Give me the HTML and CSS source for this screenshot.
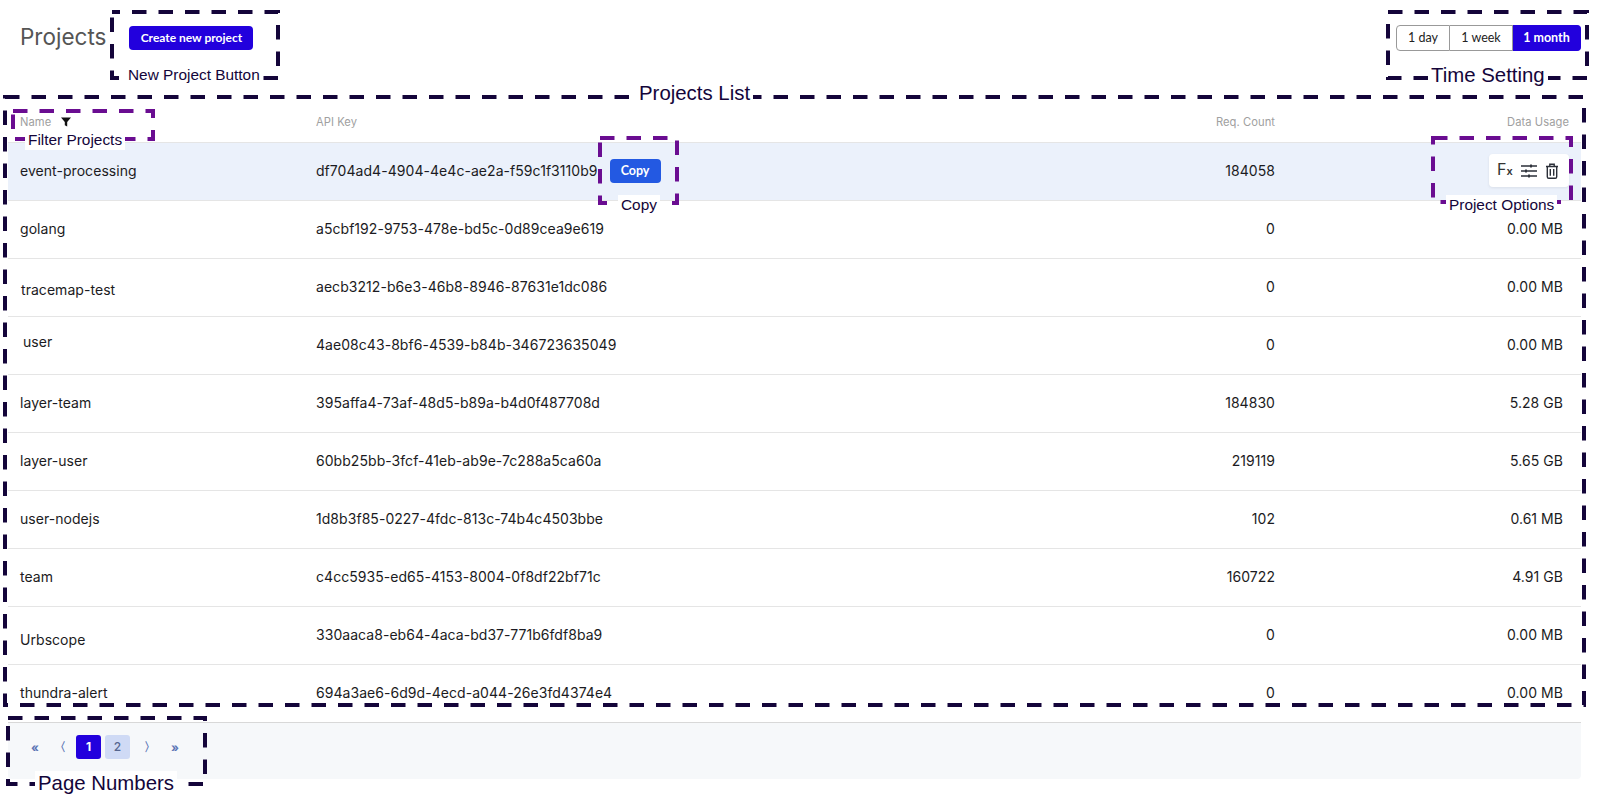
FILE: index.html
```html
<!DOCTYPE html>
<html lang="en">
<head>
  <meta charset="UTF-8">
  <title>Projects</title>
  <link rel="stylesheet" href="styles.css">
</head>
<body>
  <div id="page">
    <div class="top-bar">
      <h1>Projects</h1>
      <button class="create-btn">Create new project</button>
      <div class="time-group">
        <button>1 day</button>
        <button>1 week</button>
        <button class="active">1 month</button>
      </div>
    </div>

    <div class="row head">
      <div class="name-head">Name
        <svg width="10" height="10" viewBox="0 0 10 10"><path d="M0 0.5h10L6.2 5v4.5L3.8 8.2V5z" fill="#111"/></svg>
      </div>
      <div>API Key</div>
      <div class="num">Req. Count</div>
      <div class="usage">Data Usage</div>
    </div>

    <div class="row selected">
      <div>event-processing</div>
      <div class="key-cell">df704ad4-4904-4e4c-ae2a-f59c1f3110b9 <button class="copy-btn">Copy</button></div>
      <div class="num">184058</div>
      <div class="options-cell">
        <div class="options">
          <span class="fx">F<small>x</small></span>
          <svg width="18" height="14" viewBox="0 0 18 14" fill="none" stroke="#2b2f38" stroke-width="1.6"><path d="M1 2h16M1 7h16M1 12h16"/><path d="M11 .4v3.2M6 5.4v3.2M9 10.4v3.2" stroke-width="1.8"/></svg>
          <svg width="14" height="16" viewBox="0 0 14 16" fill="none" stroke="#2b2f38" stroke-width="1.4"><path d="M1 3.5h12M4.8 3.2V1.2h4.4v2M2.3 3.5v10.2c0 .9.6 1.6 1.5 1.6h6.4c.9 0 1.5-.7 1.5-1.6V3.5M5.3 6v6.8M8.7 6v6.8"/></svg>
        </div>
      </div>
    </div>
    <div class="row"><div>golang</div><div>a5cbf192-9753-478e-bd5c-0d89cea9e619</div><div class="num">0</div><div class="usage-val">0.00 MB</div></div>
    <div class="row"><div class="tracemap">tracemap-test</div><div>aecb3212-b6e3-46b8-8946-87631e1dc086</div><div class="num">0</div><div class="usage-val">0.00 MB</div></div>
    <div class="row"><div class="user-name">user</div><div>4ae08c43-8bf6-4539-b84b-346723635049</div><div class="num">0</div><div class="usage-val">0.00 MB</div></div>
    <div class="row"><div>layer-team</div><div>395affa4-73af-48d5-b89a-b4d0f487708d</div><div class="num">184830</div><div class="usage-val">5.28 GB</div></div>
    <div class="row"><div>layer-user</div><div>60bb25bb-3fcf-41eb-ab9e-7c288a5ca60a</div><div class="num">219119</div><div class="usage-val">5.65 GB</div></div>
    <div class="row"><div>user-nodejs</div><div>1d8b3f85-0227-4fdc-813c-74b4c4503bbe</div><div class="num">102</div><div class="usage-val">0.61 MB</div></div>
    <div class="row"><div>team</div><div>c4cc5935-ed65-4153-8004-0f8df22bf71c</div><div class="num">160722</div><div class="usage-val">4.91 GB</div></div>
    <div class="row"><div class="urbscope">Urbscope</div><div>330aaca8-eb64-4aca-bd37-771b6fdf8ba9</div><div class="num">0</div><div class="usage-val">0.00 MB</div></div>
    <div class="row"><div>thundra-alert</div><div>694a3ae6-6d9d-4ecd-a044-26e3fd4374e4</div><div class="num">0</div><div class="usage-val">0.00 MB</div></div>

    <div class="pager">
      <span class="arrow">«</span>
      <span class="arrow prev">〈</span>
      <span class="page on">1</span>
      <span class="page">2</span>
      <span class="arrow next">〉</span>
      <span class="arrow">»</span>
    </div>
  </div>

  <!-- annotation boxes drawn over the screenshot -->
  <svg class="marks" width="1600" height="805">
    <g class="navy">
      <rect class="new-box" x="112" y="12" width="166" height="66"/>
      <rect x="1388" y="12" width="199" height="66"/>
      <rect x="5" y="97" width="1579" height="608"/>
      <rect x="8" y="718" width="197" height="66"/>
    </g>
    <g class="violet">
      <rect x="13" y="111" width="140" height="28"/>
      <rect x="600" y="138" width="77" height="65"/>
      <rect x="1433" y="138" width="138" height="64"/>
    </g>
  </svg>
  <span class="note small new-note">New Project Button</span>
  <span class="note time-note">Time Setting</span>
  <span class="note list-note">Projects List</span>
  <span class="note small filter-note">Filter Projects</span>
  <span class="note small copy-note">Copy</span>
  <span class="note small options-note">Project Options</span>
  <span class="note pages-note">Page Numbers</span>
</body>
</html>
```

FILE: styles.css
```css
body {
  margin: 0;
  font-family: 'Inter', sans-serif;
  color: #1b1b22;
  background: #fff;
  height: 805px;
  overflow: hidden;
  position: relative;
}

#page {
  padding: 0 19px 0 8px;
}

.top-bar {
  height: 100px;
  display: flex;
  align-items: flex-start;
  padding: 25px 0 0 12px;
  box-sizing: border-box;
}

.top-bar h1 {
  margin: -1px 0 0;
  font-size: 22.5px;
  font-weight: 400;
  line-height: 25px;
  color: #555;
}

.create-btn {
  margin-left: 23px;
  margin-top: 1px;
  width: 124px;
  height: 24px;
  border: none;
  border-radius: 4px;
  background: #2200dd;
  color: #fff;
  font-family: 'Lato', sans-serif;
  font-weight: 700;
  font-size: 12px;
  padding: 0 0 2px;
}

.time-group {
  margin-left: auto;
  display: flex;
  height: 26px;
}

.time-group button {
  font-family: 'Lato', sans-serif;
  font-size: 12.5px;
  color: #222;
  background: #fff;
  border: 1px solid #999;
  border-left: none;
  padding: 0 0 2px;
  width: 63px;
}

.time-group button:first-child {
  width: 54px;
  border-left: 1px solid #999;
  border-radius: 4px 0 0 4px;
}

.time-group .active {
  width: 68px;
  font-weight: 700;
  background: #2200dd;
  border-color: #2200dd;
  color: #fff;
  border-radius: 0 4px 4px 0;
}

.row {
  display: grid;
  grid-template-columns: 296px 500px 459px 1fr;
  align-items: center;
  height: 58px;
  box-sizing: border-box;
  padding: 0 0 2px 12px;
  border-bottom: 1px solid #e5e5e5;
  font-size: 14px;
  letter-spacing: 0.05px;
}

.row.head {
  height: 43px;
  font-size: 11.2px;
  color: #a0a0a0;
  padding-bottom: 2px;
  padding-top: 3px;
}

.name-head svg {
  margin-left: 7px;
  vertical-align: -1px;
}

.num {
  text-align: right;
}

.usage {
  text-align: right;
  padding-right: 12px;
}

.usage-val {
  text-align: right;
  padding-right: 18px;
}

.selected {
  background: #ebf1fb;
}

.key-cell {
  display: flex;
  align-items: center;
  gap: 12px;
}

.copy-btn {
  width: 51px;
  height: 24px;
  border: none;
  border-radius: 4px;
  background: #2359e2;
  color: #fff;
  font-family: 'Lato', sans-serif;
  font-weight: 700;
  font-size: 12.5px;
  padding: 0;
}

.options-cell {
  display: flex;
  justify-content: flex-end;
  padding-right: 12px;
}

.options {
  width: 80px;
  height: 33px;
  background: #fff;
  border-radius: 4px;
  box-shadow: 0 1px 3px rgba(0, 0, 0, 0.08);
  display: flex;
  align-items: center;
  justify-content: center;
  gap: 7px;
  padding-right: 2px;
  box-sizing: border-box;
}

.fx {
  font-size: 16px;
  color: #333;
  line-height: 1;
  margin-top: -3px;
}

.fx small {
  font-size: 11px;
  font-weight: 600;
}

.tracemap {
  padding: 6px 0 0 1px;
}

.user-name {
  padding: 0 0 6px 3px;
}

.urbscope {
  padding-top: 10px;
}

.pager {
  height: 57px;
  box-sizing: border-box;
  border-top: 1px solid #d8d8d8;
  background: #f6f8fa;
  display: flex;
  align-items: center;
  padding: 0 0 8px 14px;
  font-size: 12px;
  color: #5b74b4;
  border-radius: 0 0 4px 4px;
  margin-top: -1px;
}

.arrow {
  width: 26px;
  text-align: center;
  font-weight: 700;
  margin-right: 2px;
}

.arrow.prev {
  box-sizing: border-box;
  margin-right: 0;
  padding-right: 6px;
}

.arrow.next {
  box-sizing: border-box;
  padding-left: 6px;
}

.page {
  width: 25px;
  height: 24px;
  line-height: 24px;
  border-radius: 3px;
  background: #cfdaf5;
  text-align: center;
  margin-right: 4px;
  color: #55658f;
  font-weight: 500;
}

.page.on {
  background: #2200dd;
  color: #fff;
  font-weight: 700;
}

.marks {
  position: absolute;
  top: 0;
  left: 0;
  pointer-events: none;
}

.marks rect {
  fill: none;
  stroke-width: 4;
  stroke-dasharray: 14.5 12;
}

.marks .new-box {
  stroke-dashoffset: 6.5;
}

.navy rect {
  stroke: #14053a;
}

.violet rect {
  stroke: #6a0d91;
}

.note {
  position: absolute;
  font-family: 'Liberation Sans', sans-serif;
  font-size: 20.4px;
  line-height: 24px;
  color: #14053a;
  background: #fff;
  padding: 0 3px;
  white-space: nowrap;
}

.note.small {
  font-size: 15.4px;
  line-height: 20px;
}

.new-note { left: 125px; top: 65px; }
.time-note { left: 1428px; top: 63px; }
.list-note { left: 636px; top: 81px; }
.filter-note { left: 25px; top: 130px; }
.copy-note { left: 618px; top: 195px; }
.options-note { left: 1446px; top: 195px; }
.pages-note { left: 35px; top: 771px; }
```
